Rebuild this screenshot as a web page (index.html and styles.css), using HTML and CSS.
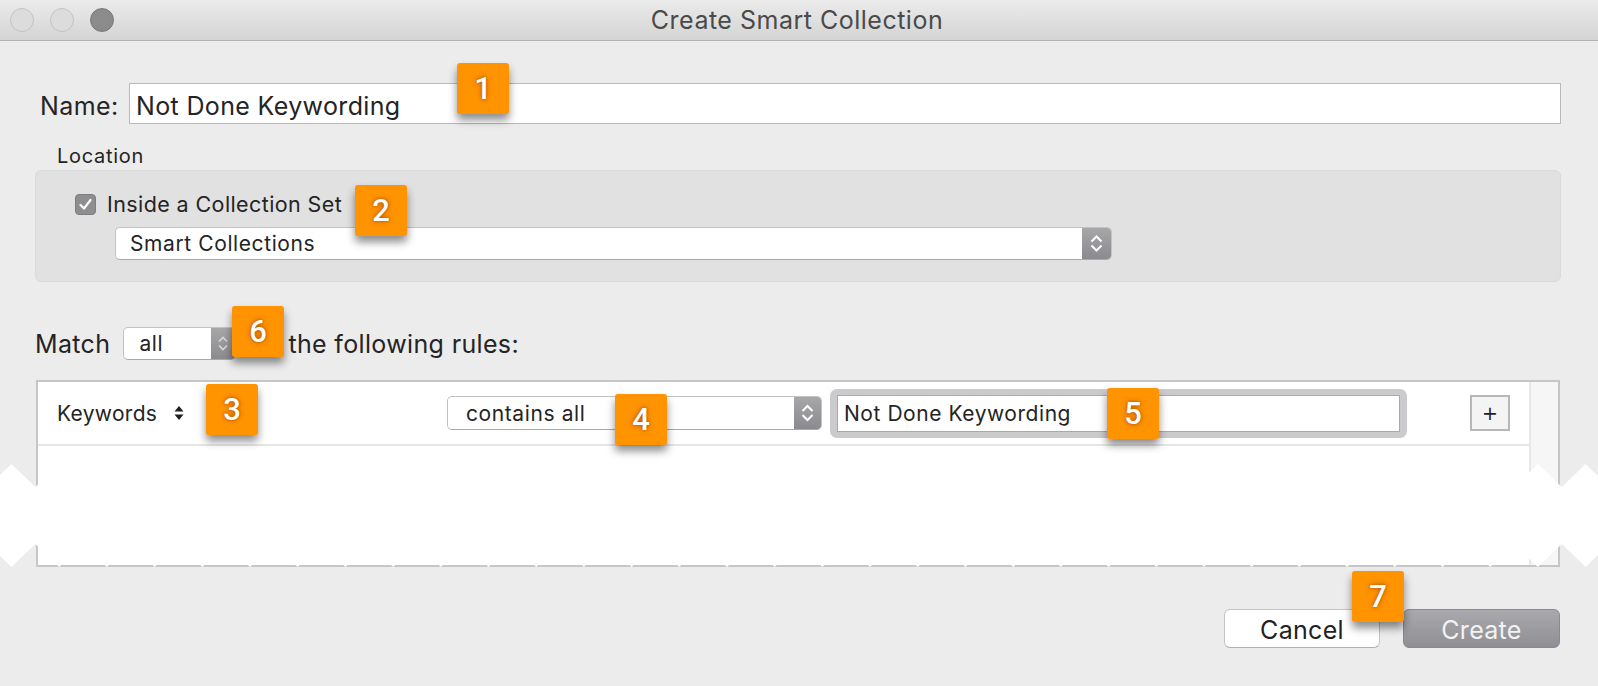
FILE: index.html
```html
<!DOCTYPE html>
<html>
<head>
<meta charset="utf-8">
<link rel="stylesheet" href="styles.css">
</head>
<body>
<div class="page">
  <div class="titlebar">
    <div class="lights">
      <span class="light"></span>
      <span class="light"></span>
      <span class="light light-dark"></span>
    </div>
    <div class="title">Create Smart Collection</div>
    <div class="spacer"></div>
  </div>

  <div class="content">
    <div class="name-row">
      <label class="name-label">Name:</label>
      <div class="textfield name-field">Not Done Keywording</div>
    </div>

    <div class="location-label">Location</div>
    <div class="location-box">
      <div class="check-row">
        <span class="checkbox">
          <svg width="21" height="21" viewBox="0 0 21 21"><path d="M5.5 11 L9 14.5 L15.5 6" fill="none" stroke="#fff" stroke-width="2.2" stroke-linecap="round" stroke-linejoin="round"/></svg>
        </span>
        <span class="check-text">Inside a Collection Set</span>
      </div>
      <div class="select select-location">
        <span class="select-text">Smart Collections</span>
        <span class="stepper">
          <svg width="29" height="33" viewBox="0 0 29 33"><path d="M9.5 14.5 L14.5 9.5 L19.5 14.5 M9.5 18.5 L14.5 23.5 L19.5 18.5" fill="none" stroke="#fff" stroke-width="2"/></svg>
        </span>
      </div>
    </div>

    <div class="match-row">
      <span class="match-text">Match</span>
      <div class="select select-all">
        <span class="select-text">all</span>
        <span class="stepper stepper-small">
          <svg width="24" height="33" viewBox="0 0 24 33"><path d="M8 14.5 L12 10.5 L16 14.5 M8 18.5 L12 22.5 L16 18.5" fill="none" stroke="#d8d8d8" stroke-width="1.6"/></svg>
        </span>
      </div>
      <span class="match-text following">the following rules:</span>
    </div>

    <div class="rules-table">
      <div class="rules-main">
        <div class="rule-row">
          <div class="rule-field">
            <span>Keywords</span>
            <svg class="updown" width="10" height="18" viewBox="0 0 10 18"><path d="M0.5 7.5 L5 2 L9.5 7.5 Z M0.5 10.5 L5 16 L9.5 10.5 Z" fill="#1f1f1f"/></svg>
          </div>
          <div class="select select-op">
            <span class="select-text">contains all</span>
            <span class="stepper">
              <svg width="27" height="34" viewBox="0 0 27 34"><path d="M8.5 15 L13.5 10 L18.5 15 M8.5 19 L13.5 24 L18.5 19" fill="none" stroke="#fff" stroke-width="2"/></svg>
            </span>
          </div>
          <div class="focus-ring">
            <div class="textfield value-field">Not Done Keywording</div>
          </div>
          <div class="plus-btn">+</div>
        </div>
        <div class="rule-empty"></div>
      </div>
      <div class="scroll-strip"></div>
    </div>

    <div class="button-row">
      <div class="btn btn-cancel">Cancel</div>
      <div class="btn btn-create">Create</div>
    </div>
  </div>

  <svg class="tear" width="1598" height="104" viewBox="0 0 1598 104">
    <polygon id="tearpoly" fill="#ffffff" points=""/>
  </svg>

  <div class="badge b1">1</div>
  <div class="badge b2">2</div>
  <div class="badge b3">3</div>
  <div class="badge b4">4</div>
  <div class="badge b5">5</div>
  <div class="badge b6">6</div>
  <div class="badge b7">7</div>
</div>
<script src="tear.js"></script>
</body>
</html>
```

FILE: tear.js
```js
(function () {
  var period = 47.7, x0 = 11.5, amp = 23, h = 103;
  var top = [], bottom = [];
  var start = x0 - period;
  for (var x = start; x <= 1598 + period; x += period) {
    top.push([x, 0]);
    top.push([x + period / 2, amp]);
  }
  for (var i = top.length - 1; i >= 0; i--) {
    var p = top[i];
    bottom.push([p[0], p[1] === 0 ? h : h - amp]);
  }
  var pts = top.concat(bottom).map(function (p) { return p[0].toFixed(1) + ',' + p[1]; }).join(' ');
  document.getElementById('tearpoly').setAttribute('points', pts);
})();
```

FILE: styles.css
```css
* { box-sizing: border-box; }

html, body {
  margin: 0;
  padding: 0;
  background: #ececec;
}

body {
  font-family: "Inter", "Open Sans", sans-serif;
  color: #242424;
  width: 1598px;
  height: 686px;
  overflow: hidden;
}

.page {
  position: relative;
  width: 1598px;
  height: 686px;
}

/* Title bar */
.titlebar {
  height: 41px;
  display: grid;
  grid-template-columns: 1fr auto 1fr;
  align-items: center;
  background: linear-gradient(#ebebeb, #d4d4d4);
  border-bottom: 1px solid #b2b2b2;
}

.lights {
  display: flex;
  gap: 16px;
  padding-left: 10px;
}

.light {
  width: 24px;
  height: 24px;
  border-radius: 50%;
  background: #dcdcdc;
  border: 1px solid #c3c3c3;
}

.light-dark {
  background: radial-gradient(circle, #8c8c8c 40%, #888 100%);
  border-color: #777;
}

.title {
  font-size: 25px;
  color: #4a4a4a;
  letter-spacing: 0.5px;
  margin-right: 4px;
}

/* content */
.content {
  padding: 0 37px 0 35px;
}

.name-row {
  display: flex;
  align-items: center;
  margin-top: 42px;
  padding-left: 5px;
  gap: 12px;
}

.name-label {
  font-size: 25px;
  width: 77px;
  letter-spacing: 0.4px;
  padding-top: 4px;
}

.textfield {
  background: #fff;
  border: 1px solid #b9b9b9;
  display: flex;
  align-items: center;
}

.name-field {
  flex: 1;
  height: 41px;
  padding-left: 6px;
  padding-top: 4px;
  font-size: 25px;
  letter-spacing: 0.35px;
}

.location-label {
  margin-top: 20px;
  padding-left: 22px;
  height: 24px;
  line-height: 24px;
  font-size: 20px;
  letter-spacing: 0.7px;
}

.location-box {
  margin-top: 2px;
  height: 112px;
  background: #e1e1e1;
  border: 1px solid #dadada;
  border-radius: 6px;
  padding: 21px 0 0 39px;
}

.check-row {
  display: flex;
  align-items: center;
  height: 24px;
  gap: 11px;
}

.checkbox {
  width: 21px;
  height: 21px;
  border-radius: 4px;
  background: #8e8e91;
  border: 1px solid #7d7d80;
  display: flex;
  align-items: center;
  justify-content: center;
}

.checkbox svg { display: block; margin: -1px; }

.check-text {
  font-size: 21.5px;
  letter-spacing: 0.4px;
}

/* selects */
.select {
  display: flex;
  align-items: stretch;
  background: #fff;
  border: 1px solid #c2c2c2;
  border-bottom-color: #a9a9a9;
  border-radius: 5px;
  overflow: hidden;
}

.select-text {
  flex: 1;
  display: flex;
  align-items: center;
  padding-left: 14px;
  font-size: 21px;
  letter-spacing: 0.6px;
}

.stepper {
  width: 29px;
  background: linear-gradient(#a7a7aa, #8b8b8f);
  display: flex;
  align-items: center;
  justify-content: center;
}

.stepper svg { display: block; }

.select-location {
  margin-top: 11px;
  margin-left: 40px;
  width: 997px;
  height: 33px;
}

.match-row {
  display: flex;
  align-items: center;
  margin-top: 45px;
  height: 33px;
}

.match-text {
  font-size: 25px;
  letter-spacing: 0.35px;
}

.select-all {
  margin-left: 13px;
  width: 113px;
  height: 33px;
}

.select-all .select-text { padding-left: 15px; }

.stepper-small {
  width: 24px;
}

.following {
  margin-left: 52px;
}

/* rules table */
.rules-table {
  margin-top: 20px;
  margin-left: 1px;
  margin-right: 1px;
  height: 187px;
  border: 2px solid #c6c6c6;
  background: #fff;
  display: flex;
}

.rules-main {
  flex: 1;
  display: flex;
  flex-direction: column;
}

.rule-row {
  height: 64px;
  border-bottom: 2px solid #e6e6e6;
  display: flex;
  align-items: center;
}

.rule-field {
  width: 409px;
  padding-left: 19px;
  display: flex;
  align-items: center;
  gap: 17px;
  font-size: 21px;
  letter-spacing: 0.3px;
}

.updown { display: block; }

.select-op {
  width: 375px;
  height: 34px;
}

.select-op .select-text { padding-left: 18px; }

.select-op .stepper { width: 27px; }

.focus-ring {
  margin-left: 8px;
  width: 577px;
  height: 49px;
  background: #cbcbce;
  border-radius: 7px;
  padding: 6px 7px;
  display: flex;
}

.value-field {
  flex: 1;
  border-color: #a9a9a9;
  padding-left: 6px;
  font-size: 21px;
  letter-spacing: 0.55px;
}

.plus-btn {
  margin-left: 63px;
  width: 40px;
  height: 36px;
  border: 2px solid #b7b7b7;
  background: #f4f4f4;
  display: flex;
  align-items: center;
  justify-content: center;
  font-size: 19px;
  color: #222;
  font-family: "DejaVu Sans", sans-serif;
}

.rule-empty { flex: 1; }

.scroll-strip {
  width: 29px;
  background: #f6f6f6;
  border-left: 2px solid #e8e8e8;
}

/* buttons */
.button-row {
  display: flex;
  justify-content: flex-end;
  gap: 23px;
  margin-top: 42px;
  margin-right: 1px;
}

.btn {
  width: 156px;
  height: 39px;
  border-radius: 6px;
  display: flex;
  align-items: center;
  justify-content: center;
  font-size: 25px;
  letter-spacing: 0.3px;
  padding-top: 2px;
}

.btn-cancel {
  background: #fff;
  border: 1px solid #c4c4c4;
  border-bottom-color: #b0b0b0;
  color: #222;
}

.btn-create {
  width: 157px;
  background: linear-gradient(#aaaaae, #8f8f93);
  border: 1px solid #8a8a8e;
  color: #f2f2f2;
}

/* torn edge overlay */
.tear {
  position: absolute;
  left: 0;
  top: 464px;
  display: block;
}

/* annotation badges */
.badge {
  position: absolute;
  width: 52px;
  height: 51px;
  background: #ff9300;
  border-radius: 3px;
  box-shadow: 0 6px 8px rgba(0, 0, 0, 0.45);
  color: #fff;
  font-family: "Roboto", "Liberation Sans", sans-serif;
  font-weight: 500;
  font-size: 31px;
  display: flex;
  align-items: center;
  justify-content: center;
  text-shadow: 0 0 5px rgba(170, 70, 0, 0.85), 0 0 2px rgba(170, 70, 0, 0.6);
}

.b1 { left: 457px; top: 63px; }
.b2 { left: 355px; top: 185px; }
.b3 { left: 206px; top: 384px; }
.b4 { left: 615px; top: 394px; }
.b5 { left: 1107px; top: 388px; }
.b6 { left: 232px; top: 306px; }
.b7 { left: 1352px; top: 571px; }
```
